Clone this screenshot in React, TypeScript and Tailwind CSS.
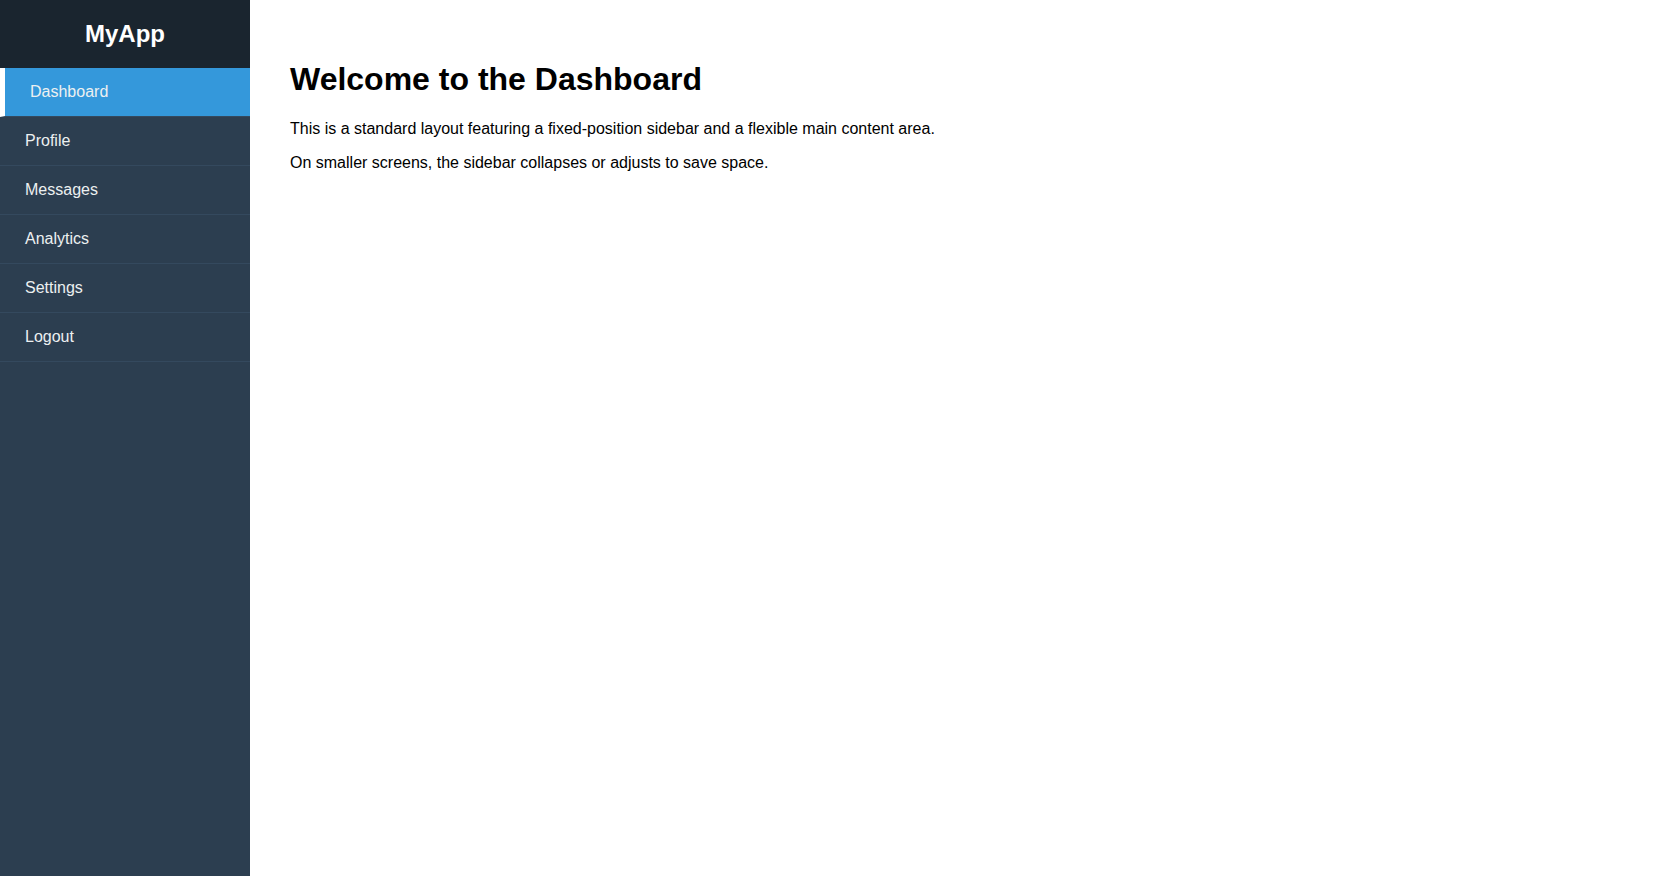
import React from "react";

const items = ["Dashboard", "Profile", "Messages", "Analytics", "Settings", "Logout"];

export default function App() {
  return (
    <div className="flex min-h-screen w-full bg-white" style={{ fontFamily: '"Liberation Sans", Arial, sans-serif' }}>
      <aside className="fixed left-0 top-0 h-screen w-[250px] bg-[#2c3e50] text-[#ecf0f1]">
        <div className="bg-[#1a252f] py-[20px] text-center">
          <h2 className="text-[24px] font-bold leading-[normal] text-white">MyApp</h2>
        </div>
        <ul>
          {items.map((item, i) => (
            <li
              key={item}
              className={
                i === 0
                  ? "border-b border-[#34495e] border-l-[5px] border-l-white bg-[#3498db] px-[25px] py-[15px] text-[16px] leading-[normal]"
                  : "border-b border-[#34495e] px-[25px] py-[15px] text-[16px] leading-[normal]"
              }
            >
              {item}
            </li>
          ))}
        </ul>
      </aside>
      <main className="ml-[250px] flex-1 p-[40px] text-black">
        <h1 className="my-[21.44px] text-[32px] font-bold leading-[normal]">Welcome to the Dashboard</h1>
        <p className="my-[16px] text-[16px] leading-[normal]">
          This is a standard layout featuring a fixed-position sidebar and a flexible main content area.
        </p>
        <p className="my-[16px] text-[16px] leading-[normal]">
          On smaller screens, the sidebar collapses or adjusts to save space.
        </p>
      </main>
    </div>
  );
}
